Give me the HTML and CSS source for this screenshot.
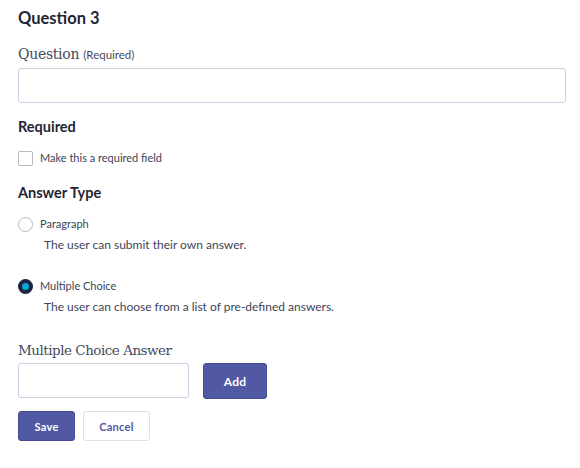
FILE: index.html
```html
<!DOCTYPE html>
<html>
<head>
    <meta charset="UTF-8">
    <title>Question 3</title>
    <link rel="stylesheet" href="styles.css">
</head>
<body>
    <div class="form">
        <h2 class="title">Question 3</h2>

        <label class="label">Question <span class="hint">(Required)</span></label>
        <input type="text" class="field field-wide">

        <h3 class="section">Required</h3>
        <div class="check-row">
            <span class="box"></span>
            <span class="opt">Make this a required field</span>
        </div>

        <h3 class="section section-type">Answer Type</h3>
        <div class="option">
            <div class="check-row">
                <span class="radio"></span>
                <span class="opt">Paragraph</span>
            </div>
            <p class="desc">The user can submit their own answer.</p>
        </div>
        <div class="option">
            <div class="check-row">
                <span class="radio on"></span>
                <span class="opt">Multiple Choice</span>
            </div>
            <p class="desc">The user can choose from a list of pre-defined answers.</p>
        </div>

        <label class="label label-mc">Multiple Choice Answer</label>
        <div class="add-row">
            <input type="text" class="field field-short">
            <button class="btn btn-add">Add</button>
        </div>

        <div class="actions">
            <button class="btn btn-save">Save</button>
            <button class="btn btn-cancel">Cancel</button>
        </div>
    </div>
</body>
</html>
```

FILE: styles.css
```css
/* общие стили */
body {
  margin: 0;
  background: #fff;
  font-family: 'Lato', 'Noto Sans', sans-serif;
  color: #1f2633;
}

.form {
  display: flex;
  flex-direction: column;
  align-items: flex-start;
  padding: 7px 14px 0 18px;
}

.title {
  font-size: 16.5px;
  font-weight: 700;
  margin: 0;
  line-height: 22px;
}

.label {
  font-family: 'DejaVu Serif', 'Liberation Serif', serif;
  font-size: 14px;
  color: #454b5c;
  margin-top: 15px;
  line-height: 20px;
  letter-spacing: -0.3px;
}

.hint {
  font-family: 'Lato', sans-serif;
  font-size: 11.5px;
  letter-spacing: 0;
}

.field {
  box-sizing: border-box;
  border: 1px solid #cfcde0;
  border-radius: 3px;
  height: 35px;
  background: #fff;
}

.field-wide {
  width: 548px;
  margin-top: 3px;
}

.section {
  font-size: 14.5px;
  font-weight: 700;
  margin: 14px 0 0;
  line-height: 20px;
}

.section-type {
  margin-top: 17px;
}

.check-row {
  display: flex;
  align-items: center;
  gap: 7px;
  margin-top: 13px;
}

.box {
  width: 13px;
  height: 13px;
  border: 1px solid #b7b9c4;
  border-radius: 2px;
}

.radio {
  box-sizing: border-box;
  width: 15px;
  height: 15px;
  border: 1px solid #b7b9c4;
  border-radius: 50%;
}

.radio.on {
  border: 4px solid #1e2543;
  background: #0aa3d6;
}

.opt {
  font-size: 11px;
  color: #3e4456;
  line-height: 16px;
}

.desc {
  font-size: 12px;
  color: #3e4456;
  margin: 5px 0 0 26px;
  line-height: 16px;
}

.option + .option {
  margin-top: 12px;
}

.label-mc {
  margin-top: 25px;
  font-size: 13.5px;
  letter-spacing: -0.5px;
}

.add-row {
  display: flex;
  align-items: flex-start;
  gap: 14px;
  margin-top: 3px;
}

.field-short {
  width: 171px;
}

.btn {
  font-family: 'Lato', sans-serif;
  font-weight: 700;
  font-size: 11px;
  border-radius: 3px;
  cursor: pointer;
  letter-spacing: 0.3px;
}

.btn-add {
  width: 64px;
  height: 36px;
  background: #5158a4;
  border: 1px solid #464d96;
  color: #fff;
  font-size: 12px;
}

.actions {
  display: flex;
  gap: 8px;
  margin-top: 12px;
}

.btn-save {
  width: 57px;
  height: 30px;
  background: #5158a4;
  border: 1px solid #464d96;
  color: #fff;
}

.btn-cancel {
  width: 67px;
  height: 30px;
  background: #fff;
  border: 1px solid #dedde8;
  color: #5158a4;
}
```
